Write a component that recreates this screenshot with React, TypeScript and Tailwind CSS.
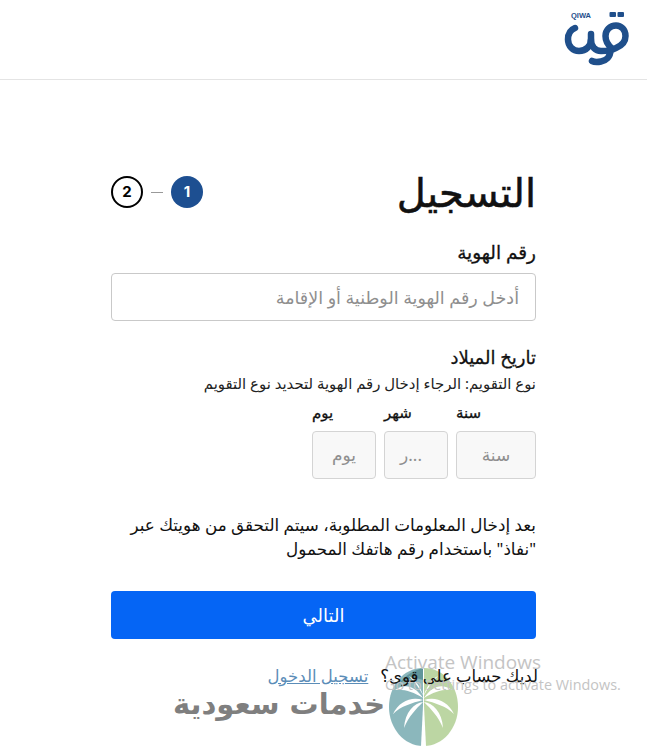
const arabic = "font-['Noto_Sans','DejaVu_Sans',sans-serif]";

function Logo() {
  return (
    <svg width="66" height="56" viewBox="0 0 66 56" fill="none" aria-hidden="true">
      <g stroke="#1f4f8b" strokeWidth="6.5" strokeLinecap="round" strokeLinejoin="round">
        <path d="M11 18C6 20 4 25 4 29.5C4 36 9 41 15 41C22 41 27 36 27 29V24" />
        <path d="M27 30C27 36.5 31.5 41 37 41C41 41 47 41 52 38C58 35.5 61.5 31.5 61.5 26C61.5 19.5 57 15.5 52 15.5C46 15.5 41.5 20 41.5 26C41.5 32 45 36 48 38.5" />
        <path d="M46.5 40C46.5 47 42 50.5 37 51.5C33 52.3 30 52 28 51" />
      </g>
      <rect x="45.5" y="2" width="6.5" height="5" rx="1" fill="#1f4f8b" />
      <rect x="53.5" y="2" width="6.5" height="5" rx="1" fill="#1f4f8b" />
      <text direction="ltr" x="7" y="7.5" fontSize="7.5" fontWeight="700" fill="#1f4f8b" fontFamily="Liberation Sans, sans-serif">QIWA</text>
    </svg>
  );
}

function PalmMark() {
  return (
    <svg width="69" height="78" viewBox="0 0 69 78" preserveAspectRatio="none" aria-hidden="true">
      <path d="M34 0C14 0 0 18 0 39C0 60 15 78 34 78Z" fill="#7fb0b5" />
      <path d="M34 0C25 2 15 8 10 16C18 10 26 9 34 12Z" fill="#4f8a90" />
      <path d="M35 0C55 0 69 18 69 39C69 60 54 78 35 78Z" fill="#b5d29a" />
      <g fill="#fff">
        <path d="M32 78L34.5 28L37 78Z" />
        <path d="M34 30C26 18 16 15 6 22C16 21 24 24 34 30Z" />
        <path d="M34 32C23 28 10 33 4 46C12 38 23 35 34 32Z" />
        <path d="M34 34C25 35 16 44 15 60C20 48 27 41 34 34Z" />
        <path d="M35 30C43 18 53 15 63 22C53 21 45 24 35 30Z" />
        <path d="M35 32C46 28 59 33 65 46C57 38 46 35 35 32Z" />
        <path d="M35 34C44 35 53 44 54 60C49 48 42 41 35 34Z" />
        <path d="M34.5 28C31 18 26 11 20 8C26 14 30 20 34.5 28Z" />
        <path d="M34.5 28C38 18 43 11 49 8C43 14 39 20 34.5 28Z" />
      </g>
    </svg>
  );
}

function DateField({ label, placeholder, width, inset = "" }: { label: string; placeholder: string; width: string; inset?: string }) {
  return (
    <div className={`flex flex-col ${width}`}>
      <span className="h-[28px] text-left text-[15px] leading-[18px] text-[#111] [-webkit-text-stroke:0.3px_#111]">{label}</span>
      <div className={`flex h-[48px] items-center justify-center rounded-[4px] border border-[#d4d4d4] bg-[#f8f8f8] text-[17px] text-[#8f8f8f] ${inset}`}>
        {placeholder}
      </div>
    </div>
  );
}

export default function App() {
  return (
    <div dir="rtl" className={`relative h-[751px] w-full overflow-hidden bg-white ${arabic}`}>
      <div className="absolute left-[389px] top-[668px] opacity-90">
        <PalmMark />
      </div>
      <span className="absolute left-[173px] top-[682px] font-['DejaVu_Sans',sans-serif] text-[29px] font-bold leading-[44px] text-[#7f7f7f]">
        خدمات سعودية
      </span>

      <header className="relative flex h-[80px] items-start border-b border-[#e4e4e4] pr-[17px] pt-[10px]">
        <Logo />
      </header>

      <main className="relative mx-auto w-[425px] pt-[86px]">
        <div className="flex h-[52px] items-center justify-between">
          <h1 className="text-[40px] font-normal leading-[52px] text-[#111] [-webkit-text-stroke:0.5px_#111]">التسجيل</h1>
          <div dir="ltr" className="flex items-center">
            <span className="flex h-[32px] w-[32px] items-center justify-center rounded-full border-2 border-black font-['Inter',sans-serif] text-[15px] font-bold text-black">2</span>
            <span className="mx-[8px] h-px w-[12px] bg-[#999]" />
            <span className="flex h-[32px] w-[32px] items-center justify-center rounded-full bg-[#1d4f91] font-['Inter',sans-serif] text-[15px] font-bold text-white">1</span>
          </div>
        </div>

        <label className="mt-[22px] block text-[18.5px] leading-[24px] text-[#111] [-webkit-text-stroke:0.3px_#111]">رقم الهوية</label>
        <div className="mt-[9px] flex h-[48px] items-center rounded-[4px] border border-[#c9c9c9] px-[16px] text-[17.5px] text-[#8f8f8f]">
          أدخل رقم الهوية الوطنية أو الإقامة
        </div>

        <h2 className="mt-[24px] text-[18px] font-normal leading-[24px] text-[#111] [-webkit-text-stroke:0.3px_#111]">تاريخ الميلاد</h2>
        <p className="mt-[4px] text-[14.9px] leading-[20px] text-[#222]">نوع التقويم: الرجاء إدخال رقم الهوية لتحديد نوع التقويم</p>

        <div className="mt-[10px] flex gap-[8px]">
          <DateField label="سنة" placeholder="سنة" width="w-[80px]" />
          <DateField label="شهر" placeholder="...ر" width="w-[64px]" inset="pr-[10px]" />
          <DateField label="يوم" placeholder="يوم" width="w-[64px]" />
        </div>

        <p className="mt-[34px] text-[16.8px] leading-[24px] text-[#111]">
          بعد إدخال المعلومات المطلوبة، سيتم التحقق من هويتك عبر "نفاذ" باستخدام رقم هاتفك المحمول
        </p>

        <button className="mt-[30px] flex h-[48px] w-full items-center justify-center rounded-[4px] bg-[#0565f5] text-[18px] text-white">
          التالي
        </button>

        <p className="mr-[-2px] mt-[25px] text-[16.5px] leading-[24px] text-[#111]">
          لديك حساب على قوى؟
          <a className="mr-[12px] text-[#5b8db8] underline">تسجيل الدخول</a>
        </p>
      </main>

      <div dir="ltr" className="pointer-events-none absolute left-[385px] top-[650px] font-['Open_Sans',sans-serif] text-[#c4c4c4]">
        <div className="text-[19px] leading-[24px]">Activate Windows</div>
        <div className="text-[14.4px] leading-[22px]">Go to Settings to activate Windows.</div>
      </div>
    </div>
  );
}
